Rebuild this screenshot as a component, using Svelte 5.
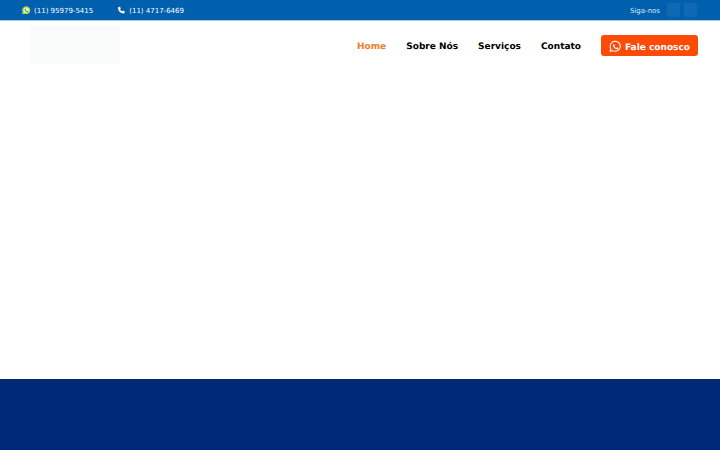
<script lang="ts">
  const nav = [
    { label: 'Home', active: true },
    { label: 'Sobre Nós', active: false },
    { label: 'Serviços', active: false },
    { label: 'Contato', active: false }
  ]
  const wa = 'M12 2.2A9.7 9.7 0 0 0 3.6 16.8L2.3 21.7l5-1.3A9.7 9.7 0 1 0 12 2.2z'
  const waHandset = 'M8.6 7c-.3 0-.7.1-1 .5-.4.5-1.1 1.200-1.100 2.700 0 1.600 1.100 3.100 1.300 3.300.2.200 2.200 3.500 5.400 4.700 2.700 1 3.200.8 3.800.8.600-.100 1.900-.8 2.100-1.500.300-.800.300-1.400.200-1.500-.100-.200-.300-.200-.6-.4l-2.200-1c-.3-.1-.5-.2-.7.100l-1 1.200c-.200.200-.4.300-.700.100-.300-.100-1.300-.5-2.500-1.500-.900-.800-1.500-1.800-1.700-2.100-.200-.300 0-.5.100-.600l.500-.600.300-.500c.100-.200.100-.400 0-.500l-1-2.400c-.200-.6-.500-.7-.700-.7z'
</script>

<div class="page">
  <div class="topbar">
    <div class="contacts">
      <span class="contact">
        <svg class="ic" viewBox="0 0 24 24" aria-hidden="true">
          <path d={wa} fill="#e9f5c8" stroke="#a8d83c" stroke-width="3.500" />
          <path d={waHandset} fill="#2f7f5a" transform="translate(2.400 2.400) scale(.8)" />
        </svg>
        <span class="num">(11) 95979-5415</span>
      </span>
      <span class="contact">
        <svg class="ic" viewBox="0 0 24 24" aria-hidden="true">
          <path d="M5 2.500 8.500 2l2.300 5.200-2.300 2.100c1.100 2.700 3.300 4.900 6 6l2.100-2.300 5.400 2.300-.6 3.700c-.2 1.200-1.200 2-2.400 2C9.800 21 3 14.200 3 5c0-1.200.8-2.300 2-2.500z" fill="#fff" />
        </svg>
        <span class="num">(11) 4717-6469</span>
      </span>
    </div>
    <div class="social">
      <span class="follow">Siga-nos</span>
      <span class="square"></span>
      <span class="square"></span>
    </div>
  </div>

  <header class="header">
    <div class="logo"></div>
    <nav class="nav">
      {#each nav as item}
        <a href="#top" class="link" class:active={item.active}>{item.label}</a>
      {/each}
      <a href="#top" class="cta">
        <svg class="cta-ic" viewBox="0 0 24 24" aria-hidden="true">
          <path d={wa} fill="none" stroke="#fff" stroke-width="2" />
          <path d={waHandset} fill="#fff" transform="translate(2.400 2.400) scale(.8)" />
        </svg>
        <span class="cta-text">Fale conosco</span>
      </a>
    </nav>
  </header>

  <main class="hero"></main>

  <footer class="footer"></footer>
</div>

<style>
  :global(body) {
    margin: 0;
    background: #fff;
  }

  .page {
    display: flex;
    flex-direction: column;
    height: 450px;
    overflow: hidden;
    font-family: "DejaVu Sans", sans-serif;
    text-rendering: geometricPrecision;
  }

  .topbar {
    flex: none;
    height: 20px;
    padding: 0 23px 0 22px;
    display: flex;
    align-items: center;
    justify-content: space-between;
    background: #0060ae;
    border-bottom: 1px solid #a9cbe6;
    color: #fff;
    font-size: 7px;
  }

  .contacts {
    display: flex;
    gap: 24px;
  }

  .contact {
    display: flex;
    align-items: center;
    gap: 3.500px;
  }

  .num {
    padding-top: 1px;
  }

  .ic {
    width: 8.500px;
    height: 8.500px;
  }

  .social {
    display: flex;
    align-items: center;
    gap: 4px;
  }

  .follow {
    margin-right: 3px;
    padding-top: 1px;
    color: #d9e8f5;
  }

  .square {
    width: 13px;
    height: 14px;
    border-radius: 1px;
    background: #0e68b3;
  }

  .header {
    flex: none;
    height: 50px;
    padding: 0 22px 0 30px;
    display: flex;
    align-items: center;
    justify-content: space-between;
  }

  .logo {
    width: 90px;
    height: 38px;
    margin-top: -3px;
    background: #fafbfb;
  }

  .nav {
    display: flex;
    align-items: center;
    gap: 20px;
  }

  .link {
    padding-top: 1px;
    font-size: 9px;
    font-weight: 700;
    color: #000;
    text-decoration: none;
  }

  .link.active {
    color: #e8802a;
  }

  .cta {
    display: flex;
    align-items: center;
    gap: 3.500px;
    height: 21px;
    margin-top: -2px;
    padding: 0 8px;
    border-radius: 3px;
    background: #fd4a07;
    color: #fff;
    font-size: 9px;
    font-weight: 700;
    text-decoration: none;
  }

  .cta-text {
    padding-top: 5px;
  }

  .cta-ic {
    width: 12.500px;
    height: 12.500px;
    margin-top: 3px;
  }

  .hero {
    flex: none;
    height: 308px;
  }

  .footer {
    flex: 1;
    background: #002a77;
  }
</style>
